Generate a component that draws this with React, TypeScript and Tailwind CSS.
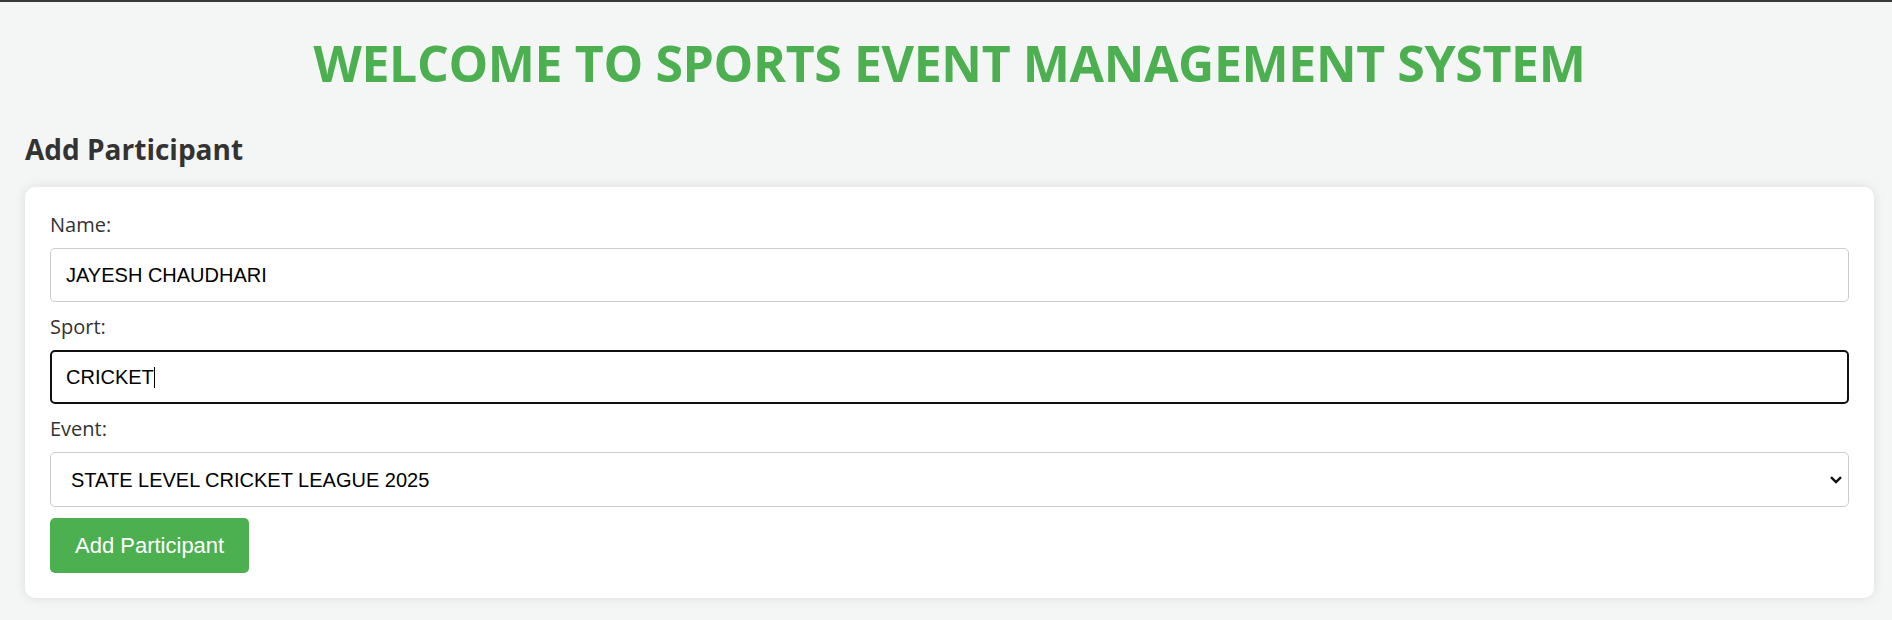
import { useState } from "react"

const events = ["STATE LEVEL CRICKET LEAGUE 2025", "DISTRICT FOOTBALL CUP 2025", "INTER COLLEGE KABADDI 2025"]

export default function App() {
  const [name, setName] = useState<string>("JAYESH CHAUDHARI")
  const [event, setEvent] = useState<string>(events[0])

  return (
    <div className="h-[620px] overflow-hidden bg-[#f4f5f5] font-['Open_Sans',sans-serif]">
      <div className="h-[2px] bg-[#3a3a3a]" />

      <main className="pl-[25px] pr-[18px]">
        <h1 className="pt-[31px] text-center text-[50px] leading-[60px] font-bold text-[#4caf50] tracking-[-0.38px]">
          WELCOME TO SPORTS EVENT MANAGEMENT SYSTEM
        </h1>

        <h2 className="mt-[38px] text-[28px] leading-[36px] font-bold text-[#333]">Add Participant</h2>

        <form
          className="mt-[20px] bg-white rounded-[10px] p-[25px] shadow-[0_0_12px_rgba(0,0,0,0.1)]"
          onSubmit={(e) => e.preventDefault()}
        >
          <label className="block text-[20px] leading-[26px] text-[#333] mb-[10px]">Name:</label>
          <input
            value={name}
            onChange={(e) => setName(e.target.value)}
            className="block w-full h-[54px] mb-[12px] px-[15px] border border-[#ccc] rounded-[5px] bg-white text-[20px] text-black font-['Liberation_Sans',Arial,sans-serif] outline-none"
          />

          <label className="block text-[20px] leading-[26px] text-[#333] mb-[10px]">Sport:</label>
          <div className="flex items-center w-full h-[54px] mb-[12px] px-[14px] border-2 border-[#101010] rounded-[5px] bg-white text-[20px] text-black font-['Liberation_Sans',Arial,sans-serif]">
            <span>CRICKET</span>
            <span className="w-px h-[21px] bg-black" />
          </div>

          <label className="block text-[20px] leading-[26px] text-[#333] mb-[10px]">Event:</label>
          <div className="relative mb-[11px]">
            <select
              value={event}
              onChange={(e) => setEvent(e.target.value)}
              className="block w-full h-[55px] pl-[20px] pr-[40px] border border-[#ccc] rounded-[5px] bg-white text-[20px] text-black font-['Liberation_Sans',Arial,sans-serif] appearance-none outline-none"
            >
              {events.map(item => <option key={item}>{item}</option>)}
            </select>
            <svg className="absolute right-[7px] top-[24px] pointer-events-none" width="12" height="8" viewBox="0 0 12 8">
              <path d="M1 1.2 L6 6 L11 1.2" fill="none" stroke="#111" strokeWidth="2.4" />
            </svg>
          </div>

          <button
            type="submit"
            className="h-[55px] px-[25px] rounded-[5px] bg-[#4caf50] text-white text-[22px] font-['Liberation_Sans',Arial,sans-serif]"
          >
            Add Participant
          </button>
        </form>
      </main>
    </div>
  )
}
